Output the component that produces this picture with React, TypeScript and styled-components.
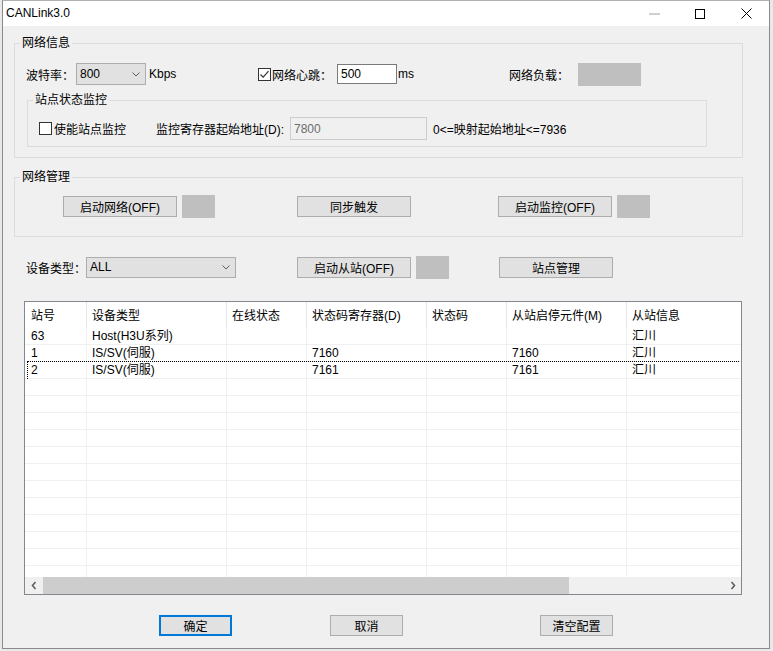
import React from "react";
import styled, { createGlobalStyle } from "styled-components";

const GlobalStyle = createGlobalStyle`
  html, body {
    margin: 0;
    padding: 0;
    background: #e9e9e9;
  }
  body {
    font-family: "Liberation Sans", "Noto Sans CJK SC", sans-serif;
    font-size: 12px;
    color: #000;
  }
  * {
    box-sizing: border-box;
  }
`;

const Window = styled.div`
  width: 768px;
  height: 649px;
  margin-left: 2px;
  border: 1px solid #8a8a8a;
  border-top-color: #b0b0b0;
  background: #f0f0f0;
  display: flex;
  flex-direction: column;
  overflow: hidden;
`;

const TitleBar = styled.div`
  height: 25px;
  flex: none;
  background: #fff;
  display: flex;
  align-items: center;
`;

const Title = styled.div`
  flex: 1;
  padding: 0 0 1px 3px;
  font-size: 12px;
`;

const CaptionButton = styled.div<{ $ml?: number }>`
  width: 46px;
  height: 25px;
  margin-left: ${(p) => p.$ml ?? 0}px;
  display: flex;
  align-items: center;
  justify-content: center;
`;

const Body = styled.div`
  flex: 1;
  padding: 9px 0 0 11px;
  display: flex;
  flex-direction: column;
`;

const Group = styled.fieldset<{ $w: number; $mt?: number; $ml?: number; $pb: number }>`
  margin: ${(p) => p.$mt ?? 0}px 0 0 ${(p) => p.$ml ?? 0}px;
  width: ${(p) => p.$w}px;
  padding: 0 0 ${(p) => p.$pb}px 5px;
  border: 1px solid #dcdcdc;
  min-width: 0;
`;

const Legend = styled.legend`
  padding: 0 2px;
  height: 16px;
  line-height: 16px;
`;

const Row = styled.div<{ $mt: number; $pl: number; $h: number }>`
  display: flex;
  align-items: center;
  margin-top: ${(p) => p.$mt}px;
  padding-left: ${(p) => p.$pl}px;
  height: ${(p) => p.$h}px;
  white-space: nowrap;
`;

const Slot = styled.div<{ $w?: number; $pl?: number }>`
  flex: none;
  width: ${(p) => (p.$w ? `${p.$w}px` : "auto")};
  padding-left: ${(p) => p.$pl ?? 0}px;
  display: flex;
  align-items: center;
  white-space: nowrap;
`;

const Combo = styled.div<{ $w: number; $h: number }>`
  flex: none;
  width: ${(p) => p.$w}px;
  height: ${(p) => p.$h}px;
  background: #e1e1e1;
  border: 1px solid #adadad;
  display: flex;
  align-items: center;
  justify-content: space-between;
  padding: 0 5px 0 3px;
`;

const TextBox = styled.div<{ $w: number; $h: number; $disabled?: boolean }>`
  flex: none;
  width: ${(p) => p.$w}px;
  height: ${(p) => p.$h}px;
  border: 1px solid ${(p) => (p.$disabled ? "#cccccc" : "#7a7a7a")};
  background: ${(p) => (p.$disabled ? "#f0f0f0" : "#fff")};
  color: ${(p) => (p.$disabled ? "#6d6d6d" : "#000")};
  padding-left: 3px;
  display: flex;
  align-items: center;
`;

const Indicator = styled.div<{ $w: number; $h: number; $ml?: number }>`
  flex: none;
  width: ${(p) => p.$w}px;
  height: ${(p) => p.$h}px;
  margin-left: ${(p) => p.$ml ?? 0}px;
  background: #bfbfbf;
`;

const Button = styled.button<{ $w: number; $ml?: number; $default?: boolean }>`
  flex: none;
  width: ${(p) => p.$w}px;
  height: 21px;
  margin: 0 0 0 ${(p) => p.$ml ?? 0}px;
  padding: 0;
  background: #e1e1e1;
  border: ${(p) => (p.$default ? "2px solid #0078d7" : "1px solid #adadad")};
  font: inherit;
  color: #000;
  white-space: nowrap;
`;

const Check = styled.span<{ $mr: number }>`
  flex: none;
  width: 13px;
  height: 13px;
  margin-right: ${(p) => p.$mr}px;
  border: 1px solid #333;
  background: #fff;
  display: flex;
  align-items: center;
  justify-content: center;
`;

const TableFrame = styled.div`
  margin: 22px 0 0 10px;
  width: 718px;
  height: 294px;
  flex: none;
  border: 1px solid #828790;
  background: #fff;
  display: flex;
  flex-direction: column;
  overflow: hidden;
`;

const HeaderRow = styled.div`
  height: 26px;
  flex: none;
  display: flex;
`;

const HeadCell = styled.div<{ $w: number; $pl: number }>`
  flex: none;
  width: ${(p) => p.$w}px;
  padding-left: ${(p) => p.$pl}px;
  border-right: 1px solid #e5e5e5;
  display: flex;
  align-items: center;
  padding-bottom: 2px;
  white-space: nowrap;
`;

const Rows = styled.div`
  flex: 1;
  overflow: hidden;
`;

const DataRow = styled.div<{ $focused?: boolean }>`
  position: relative;
  height: 17px;
  display: flex;
  border-bottom: 1px solid #f0f0f0;

  ${(p) =>
    p.$focused &&
    `
    &::after {
      content: "";
      position: absolute;
      left: 2px;
      right: 2px;
      top: -1px;
      height: 17px;
      border-top: 1px dotted #000;
      border-left: 1px dotted #000;
    }
  `}
`;

const DataCell = styled.div<{ $w: number; $pl: number }>`
  flex: none;
  width: ${(p) => p.$w}px;
  padding-left: ${(p) => p.$pl}px;
  border-right: 1px solid #f0f0f0;
  line-height: 16px;
  white-space: nowrap;
  overflow: hidden;
`;

const ScrollBar = styled.div`
  height: 17px;
  flex: none;
  display: flex;
  background: #f0f0f0;
`;

const ScrollArrow = styled.div`
  width: 17px;
  flex: none;
  display: flex;
  align-items: center;
  justify-content: center;
`;

const ScrollTrack = styled.div`
  flex: 1;
  padding-left: 1px;
`;

const ScrollThumb = styled.div`
  width: 526px;
  height: 100%;
  background: #cdcdcd;
`;

const columns = [
  { w: 62, pl: 6, title: "站号" },
  { w: 140, pl: 5, title: "设备类型" },
  { w: 80, pl: 5, title: "在线状态" },
  { w: 120, pl: 5, title: "状态码寄存器(D)" },
  { w: 80, pl: 5, title: "状态码" },
  { w: 120, pl: 5, title: "从站启停元件(M)" },
  { w: 120, pl: 5, title: "从站信息" },
];

const data: string[][] = [
  ["63", "Host(H3U系列)", "", "", "", "", "汇川"],
  ["1", "IS/SV(伺服)", "", "7160", "", "7160", "汇川"],
  ["2", "IS/SV(伺服)", "", "7161", "", "7161", "汇川"],
];

const rows: string[][] = [...data, ...Array.from({ length: 13 }, () => columns.map(() => ""))];

const Chevron = () => (
  <svg width="8" height="5" viewBox="0 0 8 5">
    <path d="M0.5 0.5 L4 4 L7.5 0.5" fill="none" stroke="#606060" strokeWidth="1" />
  </svg>
);

const CheckMark = () => (
  <svg width="11" height="11" viewBox="0 0 11 11">
    <path d="M1.5 5.5 L4.2 8.2 L9.5 2.2" fill="none" stroke="#333" strokeWidth="1.2" />
  </svg>
);

const ArrowGlyph = ({ dir }: { dir: "left" | "right" }) => (
  <svg width="6" height="9" viewBox="0 0 6 9">
    <path
      d={dir === "left" ? "M4.5 1 L1.5 4.5 L4.5 8" : "M1.5 1 L4.5 4.5 L1.5 8"}
      fill="none"
      stroke="#606060"
      strokeWidth="1.6"
    />
  </svg>
);

const App = () => {
  return (
    <>
      <GlobalStyle />
      <Window>
        <TitleBar>
          <Title>CANLink3.0</Title>
          <CaptionButton>
            <svg width="11" height="2" viewBox="0 0 11 2">
              <path d="M0 1 H11" stroke="#a0a0a0" strokeWidth="1" />
            </svg>
          </CaptionButton>
          <CaptionButton>
            <svg width="10" height="10" viewBox="0 0 10 10">
              <rect x="0.5" y="0.5" width="9" height="9" fill="none" stroke="#000" strokeWidth="1" />
            </svg>
          </CaptionButton>
          <CaptionButton>
            <svg width="11" height="11" viewBox="0 0 11 11">
              <path d="M0.5 0.5 L10.5 10.5 M10.5 0.5 L0.5 10.5" stroke="#000" strokeWidth="1" />
            </svg>
          </CaptionButton>
        </TitleBar>

        <Body>
          <Group $w={729} $pb={10}>
            <Legend>网络信息</Legend>
            <Row $mt={11} $pl={6} $h={24}>
              <Slot $w={50}>波特率：</Slot>
              <Combo $w={70} $h={22}>
                <span>800</span>
                <Chevron />
              </Combo>
              <Slot $w={112} $pl={3}>Kbps</Slot>
              <Slot $w={79}>
                <Check $mr={1}>
                  <CheckMark />
                </Check>
                网络心跳：
              </Slot>
              <TextBox $w={60} $h={20}>500</TextBox>
              <Slot $w={112} $pl={1}>ms</Slot>
              <Slot $w={69}>网络负载：</Slot>
              <Indicator $w={63} $h={23} />
            </Row>

            <Group $w={680} $mt={6} $ml={7} $pb={6}>
              <Legend>站点状态监控</Legend>
              <Row $mt={9} $pl={6} $h={23}>
                <Slot $w={117}>
                  <Check $mr={2} />
                  使能站点监控
                </Slot>
                <Slot $w={134}>监控寄存器起始地址(D):</Slot>
                <TextBox $w={137} $h={23} $disabled>7800</TextBox>
                <Slot $pl={6}>0&lt;=映射起始地址&lt;=7936</Slot>
              </Row>
            </Group>
          </Group>

          <Group $w={729} $mt={11} $pb={18}>
            <Legend>网络管理</Legend>
            <Row $mt={10} $pl={43} $h={23}>
              <Button $w={114}>启动网络(OFF)</Button>
              <Indicator $w={33} $h={23} $ml={5} />
              <Button $w={114} $ml={82}>同步触发</Button>
              <Button $w={114} $ml={87}>启动监控(OFF)</Button>
              <Indicator $w={33} $h={23} $ml={5} />
            </Row>
          </Group>

          <Row $mt={18} $pl={12} $h={24}>
            <Slot $w={60}>设备类型：</Slot>
            <Combo $w={150} $h={21}>
              <span>ALL</span>
              <Chevron />
            </Combo>
            <Button $w={114} $ml={61}>启动从站(OFF)</Button>
            <Indicator $w={33} $h={23} $ml={5} />
            <Button $w={114} $ml={50}>站点管理</Button>
          </Row>

          <TableFrame>
            <HeaderRow>
              {columns.map((c) => (
                <HeadCell key={c.title} $w={c.w} $pl={c.pl}>
                  {c.title}
                </HeadCell>
              ))}
            </HeaderRow>
            <Rows>
              {rows.map((r, i) => (
                <DataRow key={i} $focused={i === 2}>
                  {r.map((v, j) => (
                    <DataCell key={j} $w={columns[j].w} $pl={columns[j].pl}>
                      {v}
                    </DataCell>
                  ))}
                </DataRow>
              ))}
            </Rows>
            <ScrollBar>
              <ScrollArrow>
                <ArrowGlyph dir="left" />
              </ScrollArrow>
              <ScrollTrack>
                <ScrollThumb />
              </ScrollTrack>
              <ScrollArrow>
                <ArrowGlyph dir="right" />
              </ScrollArrow>
            </ScrollBar>
          </TableFrame>

          <Row $mt={20} $pl={145} $h={21}>
            <Button $w={73} $default>确定</Button>
            <Button $w={73} $ml={98}>取消</Button>
            <Button $w={73} $ml={137}>清空配置</Button>
          </Row>
        </Body>
      </Window>
    </>
  );
};

export default App;
